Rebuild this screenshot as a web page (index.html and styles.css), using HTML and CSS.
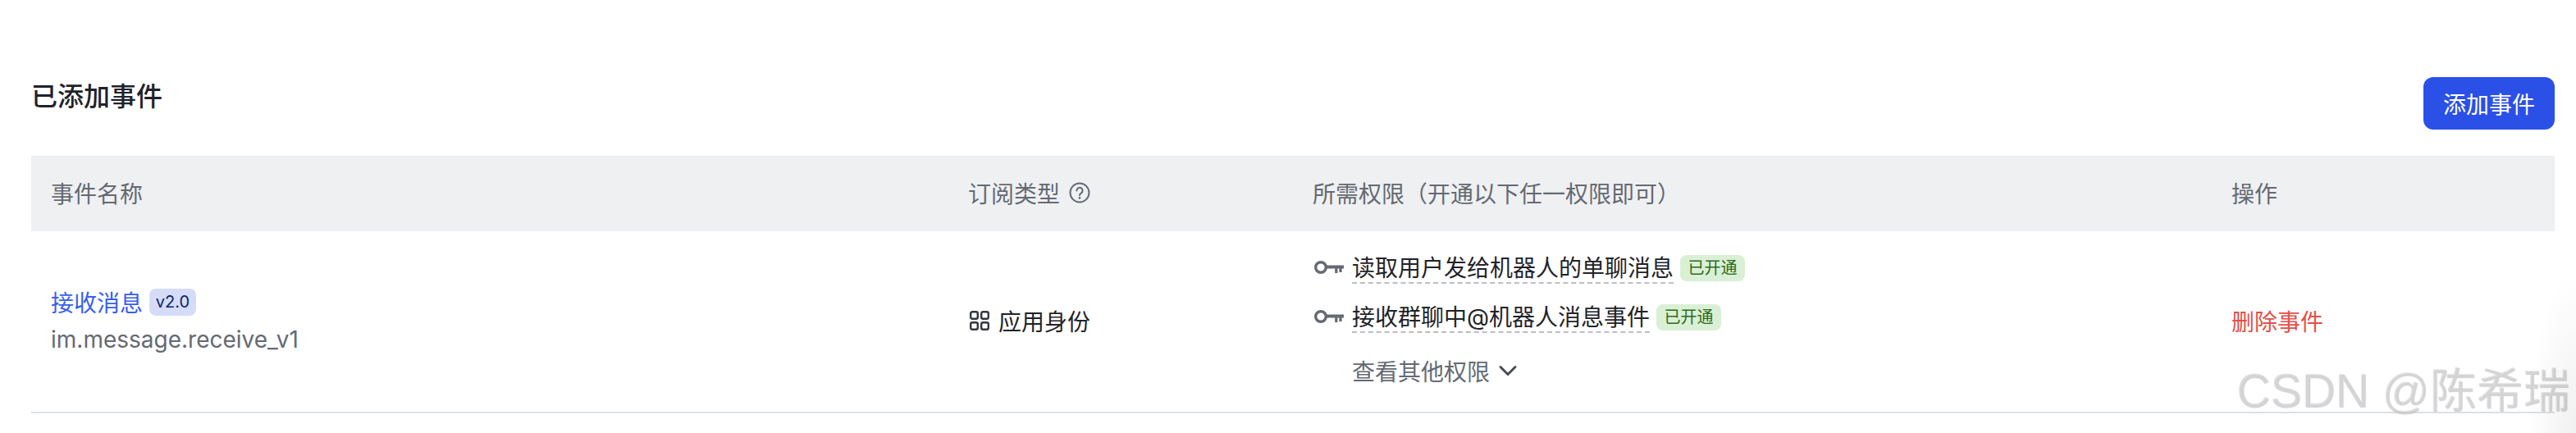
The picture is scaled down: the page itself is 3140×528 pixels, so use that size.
FILE: index.html
```html
<!DOCTYPE html>
<html lang="zh-CN">
<head>
    <meta charset="UTF-8">
    <title>已添加事件</title>
    <link rel="stylesheet" href="styles.css">
</head>
<body>
    <div class="section">
        <div class="section-head">
            <h3>已添加事件</h3>
            <button class="btn-primary">添加事件</button>
        </div>
        <table class="event-table">
            <thead>
                <tr>
                    <th>事件名称</th>
                    <th>
                        <span class="th-inner">订阅类型
                            <svg class="icon-help" viewBox="0 0 26 26" fill="none" stroke="currentColor" stroke-width="2">
                                <circle cx="13" cy="13" r="11.5"/>
                                <path d="M9.4 10.4a3.6 3.6 0 1 1 5.6 3c-1.3.8-2 1.4-2 2.8" stroke-linecap="round"/>
                                <circle cx="13" cy="19.4" r="1.3" fill="currentColor" stroke="none"/>
                            </svg>
                        </span>
                    </th>
                    <th>所需权限（开通以下任一权限即可）</th>
                    <th>操作</th>
                </tr>
            </thead>
            <tbody>
                <tr>
                    <td>
                        <div class="event-name"><a>接收消息</a><span class="version">v2.0</span></div>
                        <div class="event-key">im.message.receive_v1</div>
                    </td>
                    <td>
                        <span class="sub-type">
                            <svg class="icon-grid" viewBox="0 0 24 24" fill="none" stroke="currentColor" stroke-width="2.4">
                                <rect x="1.2" y="1.2" width="8.6" height="8.6" rx="2"/>
                                <rect x="14.2" y="1.2" width="8.6" height="8.6" rx="2"/>
                                <rect x="1.2" y="14.2" width="8.6" height="8.6" rx="2"/>
                                <rect x="14.2" y="14.2" width="8.6" height="8.6" rx="2"/>
                            </svg>
                            应用身份
                        </span>
                    </td>
                    <td class="perm-cell">
                        <div class="perm">
                            <svg class="icon-key" viewBox="0 0 36 18" fill="#646a73">
                                <path d="M8 1a8 8 0 1 1 0 16A8 8 0 0 1 8 1Zm0 3.400a4.600 4.600 0 1 0 0 9.200 4.600 4.600 0 0 0 0-9.200Z" fill-rule="evenodd"/>
                                <path d="M14 6.600h22v4h-2.400v4.400h-3.200v-4.400h-2v5.400h-3.200v-5.400H14Z"/>
                            </svg>
                            <span class="perm-name">读取用户发给机器人的单聊消息</span>
                            <span class="tag-on">已开通</span>
                        </div>
                        <div class="perm">
                            <svg class="icon-key" viewBox="0 0 36 18" fill="#646a73">
                                <path d="M8 1a8 8 0 1 1 0 16A8 8 0 0 1 8 1Zm0 3.400a4.600 4.600 0 1 0 0 9.200 4.600 4.600 0 0 0 0-9.200Z" fill-rule="evenodd"/>
                                <path d="M14 6.600h22v4h-2.400v4.400h-3.200v-4.400h-2v5.400h-3.200v-5.400H14Z"/>
                            </svg>
                            <span class="perm-name">接收群聊中@机器人消息事件</span>
                            <span class="tag-on">已开通</span>
                        </div>
                        <div class="perm-more">
                            查看其他权限
                            <svg class="icon-chevron" viewBox="0 0 24 14" fill="none" stroke="currentColor" stroke-width="3" stroke-linecap="round" stroke-linejoin="round">
                                <path d="M3 2.500l9 9 9-9"/>
                            </svg>
                        </div>
                    </td>
                    <td><a class="danger">删除事件</a></td>
                </tr>
            </tbody>
        </table>
    </div>
    <div class="watermark">CSDN @陈希瑞</div>
</body>
</html>
```

FILE: styles.css
```css
* {
    box-sizing: border-box;
}
html, body {
    margin: 0;
    background: #fff;
}
body {
    position: relative;
    width: 3140px;
    height: 528px;
    overflow: hidden;
    font-family: Inter, "Noto Sans CJK SC", sans-serif;
    font-size: 28px;
    color: #1f2329;
}
/* faint shade in the bottom right corner of the picture */
body::after {
    content: "";
    position: absolute;
    right: 0;
    bottom: 0;
    width: 60px;
    height: 200px;
    background: radial-gradient(ellipse at 100% 100%, rgba(0, 0, 0, 0.06), transparent 70%);
}
.section {
    padding: 94px 26px 0 38px;
}
.section-head {
    display: flex;
    justify-content: space-between;
    align-items: flex-start;
    margin-bottom: 32px;
}
.section-head h3 {
    margin: 0;
    font-size: 32px;
    line-height: 48px;
    font-weight: 500;
}
.btn-primary {
    width: 160px;
    height: 64px;
    padding: 0;
    border: none;
    border-radius: 12px;
    background: #2b50e8;
    color: #fff;
    font: inherit;
}
.event-table {
    width: 3076px;
    table-layout: fixed;
    border-collapse: collapse;
}
.event-table th:nth-child(1) { width: 1118px; }
.event-table th:nth-child(2) { width: 420px; }
.event-table th:nth-child(3) { width: 1120px; }
.event-table th:nth-child(4) { width: 418px; }
.event-table th {
    height: 92px;
    padding: 0 24px 2px;
    background: #eff0f2;
    color: #646a73;
    font-weight: 400;
    text-align: left;
}
.event-table td {
    height: 220px;
    padding: 0 24px 2px;
    vertical-align: middle;
    border-bottom: 2px solid #dee0e3;
}
.th-inner {
    display: inline-flex;
    align-items: center;
    gap: 11px;
}
.icon-help {
    width: 26px;
    height: 26px;
}
.event-name {
    display: flex;
    align-items: center;
    height: 44px;
    gap: 8px;
}
.event-name a {
    color: #3560ec;
}
.version {
    display: block;
    width: 57px;
    height: 33px;
    border-radius: 8px;
    background: #d5dcf8;
    color: #0e1f6b;
    font-size: 20px;
    line-height: 33px;
    text-align: center;
}
.event-key {
    margin-top: 2px;
    line-height: 44px;
    color: #646a73;
}
.sub-type {
    display: inline-flex;
    align-items: center;
    gap: 11px;
    margin-left: 2px;
}
.icon-grid {
    width: 24px;
    height: 24px;
    color: #33373d;
}
.event-table td.perm-cell {
    padding: 24px 24px 28px;
}
.perm {
    display: flex;
    align-items: center;
    height: 44px;
    margin-bottom: 16px;
}
.perm + .perm {
    margin-bottom: 20px;
}
.icon-key {
    width: 36px;
    height: 18px;
    margin: -4px 10px 0 2px;
}
.perm-name {
    display: block;
    padding-top: 1px;
    line-height: 33px;
    border-bottom: 2px dashed #bbbfc4;
}
.tag-on {
    display: block;
    width: 79px;
    height: 32px;
    margin: -2px 0 0 8px;
    border-radius: 8px;
    background: #d9f0d5;
    color: #2f6a1e;
    font-size: 20px;
    line-height: 32px;
    text-align: center;
}
.perm-more {
    display: flex;
    align-items: center;
    height: 44px;
    padding-left: 48px;
    gap: 10px;
    color: #646a73;
}
.icon-chevron {
    width: 24px;
    height: 14px;
    color: #484c53;
}
.danger {
    color: #e34f48;
}
.watermark {
    position: absolute;
    left: 2726px;
    top: 443px;
    font-family: "Liberation Sans", "Noto Sans CJK SC", sans-serif;
    font-size: 57px;
    line-height: 66px;
    white-space: nowrap;
    color: rgba(215, 215, 215, 0.55);
    text-shadow: 1px 1px 1px rgba(140, 140, 140, 0.4);
}
```
